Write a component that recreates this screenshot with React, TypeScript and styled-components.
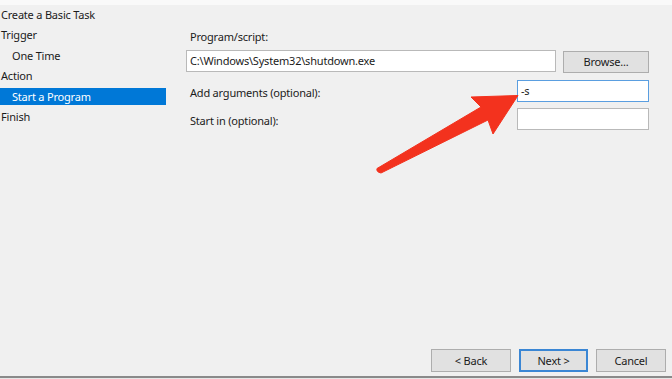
import React from 'react';
import styled, { createGlobalStyle } from 'styled-components';

const GlobalStyle = createGlobalStyle`
  html, body {
    margin: 0;
    padding: 0;
    background: #f0f0f0;
  }
  * {
    box-sizing: border-box;
  }
`;

const Window = styled.div`
  position: relative;
  width: 672px;
  height: 379px;
  display: flex;
  flex-direction: column;
  background: #f0f0f0;
  font-family: 'Noto Sans', 'Segoe UI', sans-serif;
  font-size: 11px;
  letter-spacing: -0.2px;
  color: #1b1b1b;
  overflow: hidden;
`;

const TopStrip = styled.div`
  height: 5px;
  background: #f9f9f9;
`;

const Body = styled.div`
  flex: 1;
  display: flex;
`;

const Sidebar = styled.div`
  width: 166px;
  padding-top: 0.5px;
  display: flex;
  flex-direction: column;
  gap: 3.5px;
`;

const StepItem = styled.div<{ $indent?: boolean; $active?: boolean }>`
  height: 17px;
  line-height: 17px;
  padding-left: ${(p) => (p.$indent ? '12px' : '1px')};
  background: ${(p) => (p.$active ? '#0078d7' : 'transparent')};
  color: ${(p) => (p.$active ? '#ffffff' : '#1b1b1b')};
  white-space: nowrap;
`;

const Content = styled.div`
  flex: 1;
  padding: 24px 23px 0 20px;
  display: flex;
  flex-direction: column;
`;

const Label = styled.div`
  padding-left: 4px;
  line-height: 16px;
  white-space: nowrap;
`;

const PathRow = styled.div`
  margin-top: 5px;
  display: flex;
  align-items: flex-start;
  gap: 7px;
`;

const TextBox = styled.div<{ $focused?: boolean; $width?: number }>`
  height: 22px;
  ${(p) => (p.$width ? `width: ${p.$width}px;` : 'flex: 1;')}
  background: #ffffff;
  border: 1px solid ${(p) => (p.$focused ? '#5a9ee0' : '#b9b9b9')};
  padding: 0 3px;
  line-height: 20px;
  white-space: nowrap;
`;

const BrowseButton = styled.div`
  margin-top: 1px;
  width: 86px;
  height: 22px;
  background: #e1e1e1;
  border: 1px solid #adadad;
  text-align: center;
  line-height: 20px;
`;

const FieldRow = styled.div<{ $gap: number }>`
  margin-top: ${(p) => p.$gap}px;
  display: flex;
  align-items: center;
  justify-content: space-between;
`;

const FieldLabel = styled(Label)`
  padding-top: 3px;
`;

const Footer = styled.div`
  display: flex;
  justify-content: flex-end;
  gap: 8px;
  padding: 0 6px 4px 0;
  border-bottom: 2px solid #8a8a8a;
`;

const DialogButton = styled.div<{ $width: number; $default?: boolean }>`
  width: ${(p) => p.$width}px;
  height: 23px;
  background: #e1e1e1;
  border: ${(p) => (p.$default ? '2px solid #3a86d4' : '1px solid #adadad')};
  display: flex;
  align-items: center;
  justify-content: center;
`;

const BottomEdge = styled.div`
  height: 1px;
  background: #e6e6e6;
`;

const Arrow = styled.svg`
  position: absolute;
  left: 0;
  top: 0;
  pointer-events: none;
`;

const steps = [
  { text: 'Create a Basic Task' },
  { text: 'Trigger' },
  { text: 'One Time', indent: true },
  { text: 'Action' },
  { text: 'Start a Program', indent: true, active: true },
  { text: 'Finish' },
];

export default function App() {
  return (
    <Window>
      <GlobalStyle />
      <TopStrip />
      <Body>
        <Sidebar>
          {steps.map((s) => (
            <StepItem key={s.text} $indent={s.indent} $active={s.active}>
              {s.text}
            </StepItem>
          ))}
        </Sidebar>
        <Content>
          <Label>Program/script:</Label>
          <PathRow>
            <TextBox>C:\Windows\System32\shutdown.exe</TextBox>
            <BrowseButton>Browse...</BrowseButton>
          </PathRow>
          <FieldRow $gap={7}>
            <FieldLabel>Add arguments (optional):</FieldLabel>
            <TextBox $width={132} $focused>
              -s
            </TextBox>
          </FieldRow>
          <FieldRow $gap={6}>
            <FieldLabel>Start in (optional):</FieldLabel>
            <TextBox $width={132} />
          </FieldRow>
        </Content>
      </Body>
      <Footer>
        <DialogButton $width={80}>&lt; Back</DialogButton>
        <DialogButton $width={69} $default>
          Next &gt;
        </DialogButton>
        <DialogButton $width={70}>Cancel</DialogButton>
      </Footer>
      <BottomEdge />
      <Arrow width="672" height="379" viewBox="0 0 672 379">
        <path
          d="M377 168.5 L481 107 L471 97 L518 95.5 L493 134 L488 120 L381 173 Q376 172 377 168.5 Z"
          fill="#f3321e"
          stroke="#f3321e"
          strokeWidth="1"
          strokeLinejoin="round"
        />
      </Arrow>
    </Window>
  );
}
